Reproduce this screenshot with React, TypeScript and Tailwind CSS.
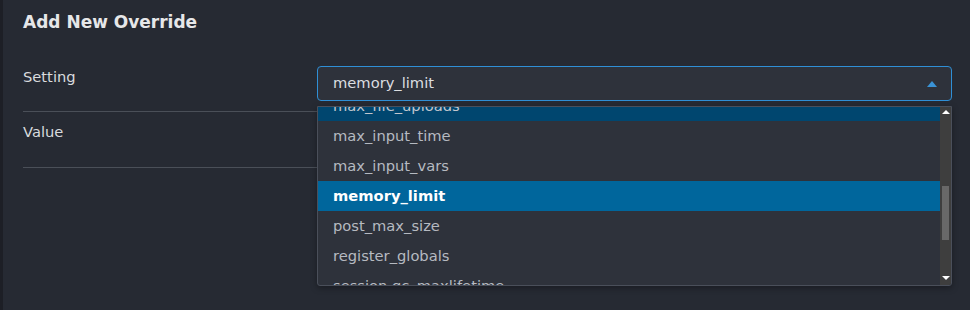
const options = [
  "max_file_uploads",
  "max_input_time",
  "max_input_vars",
  "memory_limit",
  "post_max_size",
  "register_globals",
  "session.gc_maxlifetime",
];

const hovered = "max_file_uploads";
const selected = "memory_limit";

function Dropdown() {
  return (
    <div className="absolute left-0 right-0 top-[40px] z-10 flex h-[180px] overflow-hidden rounded-b-[3px] border border-[#4a4f5a] bg-[#2e323b] shadow-[0_2px_6px_rgba(0,0,0,0.35)]">
      <ul className="mt-[-16px] flex-1">
        {options.map((o) => (
          <li
            key={o}
            className={
              o === selected
                ? "flex h-[30px] items-center bg-[#00669c] pl-[15px] font-bold text-white"
                : o === hovered
                  ? "flex h-[30px] items-center bg-[#00466f] pl-[15px] text-[#c3c7cd]"
                  : "flex h-[30px] items-center pl-[15px] text-[#b6bac1]"
            }
          >
            {o}
          </li>
        ))}
      </ul>
      <div className="flex w-[11px] flex-col items-center bg-[#3e3e3e]">
        <div className="mt-[3px] h-0 w-0 border-x-[4px] border-b-[4px] border-x-transparent border-b-white" />
        <div className="mt-[72px] h-[54px] w-[7px] bg-[#686868]" />
        <div className="mt-auto mb-[5px] h-0 w-0 border-x-[4px] border-t-[4px] border-x-transparent border-t-white" />
      </div>
    </div>
  );
}

export default function App() {
  return (
    <div className="flex h-[310px] w-[970px] bg-[#262a33] font-['DejaVu_Sans',sans-serif] text-[14.7px]">
      <div className="w-[3px] bg-[#1d1f26]" />
      <div className="flex-1 pl-5 pr-[18px] pt-[10px]">
        <h2 className="mb-[22px] text-[17px] font-bold leading-6 text-[#e6e7e9]">
          Add New Override
        </h2>

        <div className="flex border-b border-[#4a4f58] pt-[10px] pb-[10px]">
          <div className="w-[294px] pt-[1px] leading-5 text-[#d9dbde]">Setting</div>
          <div className="relative flex-1">
            <div className="flex h-[35px] items-center justify-between rounded-[4px] border border-[#2f8fd6] bg-[#2e323b] pl-[15px] pr-[14px] text-[#dcdee1]">
              <span>memory_limit</span>
              <span className="h-0 w-0 border-x-[5px] border-b-[6px] border-x-transparent border-b-[#3a93d6]" />
            </div>
            <Dropdown />
          </div>
        </div>

        <div className="flex h-[56px] border-b border-[#4a4f58] pt-[10px]">
          <div className="w-[294px] leading-5 text-[#d9dbde]">Value</div>
        </div>
      </div>
    </div>
  );
}
